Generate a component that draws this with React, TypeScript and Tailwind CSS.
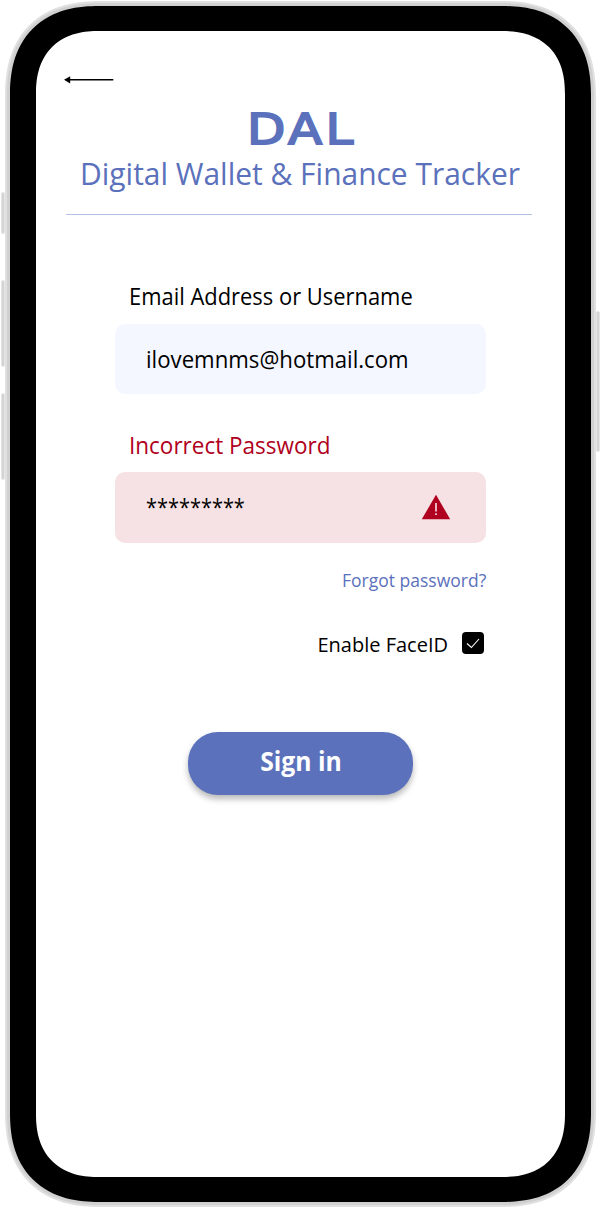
import React, { type ReactNode } from "react";

function SideButton({ className }: { className: string }) {
  return <div className={`absolute w-[4px] rounded-[2px] border border-[#e4e4e4] bg-[#d4d4d4] ${className}`} />;
}

function Phone({ children }: { children: ReactNode }) {
  return (
    <div className="relative h-[1208px] w-[601px] overflow-hidden bg-white pl-[5px] pr-[5px] pt-px pb-px">
      <SideButton className="left-[1px] top-[192px] h-[42px]" />
      <SideButton className="left-[1px] top-[280px] h-[87px]" />
      <SideButton className="left-[1px] top-[393px] h-[87px]" />
      <SideButton className="left-[596px] top-[311px] h-[141px]" />
      <div className="h-full rounded-[95px] border-2 border-[#e0e0e0] bg-[#d0d0d0] p-[3px] [corner-shape:superellipse(1.235)]">
        <div className="h-full rounded-[89px] bg-black px-[26px] py-[25px] [corner-shape:superellipse(1.235)]">
          <main className="flex h-full flex-col rounded-[63px] bg-white [corner-shape:superellipse(1.235)]">{children}</main>
        </div>
      </div>
    </div>
  );
}

export default function App() {
  return (
    <Phone>
      <button aria-label="Back" className="ml-[28px] mt-[44px] h-[10px] w-[50px]">
        <svg width="50" height="10" viewBox="0 0 50 10" fill="none">
          <path d="M5 4.8H49.3" stroke="#000" strokeWidth="1.4" />
          <path d="M0 4.8L6.2 1.2V8.4Z" fill="#000" />
        </svg>
      </button>
      <header className="ml-[30px] flex w-[466px] flex-col text-[#5b71bb]">
        <div className="ml-[181px] mt-[17px] origin-left scale-x-[1.16] font-['DejaVu_Sans',sans-serif] text-[43px] leading-[54px] tracking-[3px] [-webkit-text-stroke:1.8px_#5b71bb]">DAL</div>
        <h1 className="-mt-[2px] ml-[14px] w-max origin-left scale-x-[0.951] whitespace-nowrap font-['Open_Sans',sans-serif] text-[31.5px] leading-[38px]">Digital Wallet &amp; Finance Tracker</h1>
        <div className="mt-[22px] h-[1px] bg-[#b3c0e8]" />
      </header>
      <form className="ml-[79px] mt-[65px] flex w-[371px] flex-col whitespace-nowrap font-['Open_Sans',sans-serif] text-[23px] text-black">
        <label className="ml-[14px] w-max origin-left scale-x-[0.953] leading-[32px]">Email Address or Username</label>
        <div className="mt-[12px] flex h-[70px] items-center rounded-[10px] bg-[#f4f7ff] pl-[31px]">
          <span className="origin-left scale-x-[0.965]">ilovemnms@hotmail.com</span>
        </div>
        <label className="mt-[35px] ml-[14px] w-max origin-left scale-x-[0.978] leading-[32px] text-[#b00020]">Incorrect Password</label>
        <div className="mt-[11px] flex h-[71px] items-center justify-between rounded-[10px] bg-[#f6e2e5] pl-[31px] pr-[35px]">
          <span className="origin-left scale-x-[0.867]">*********</span>
          <svg className="mb-[2px]" width="30" height="26" viewBox="0 0 30 26">
            <path d="M15 .7L29.2 25.3H.8Z" fill="#b00020" />
            <path d="M15 9V17.5M15 19.3V21" stroke="#f6e2e5" strokeWidth="1.6" />
          </svg>
        </div>
        <a className="mt-[25px] origin-right scale-x-[0.973] self-end text-[18px] leading-[24px] text-[#5b71bb]">Forgot password?</a>
        <div className="mt-[38px] flex items-center justify-end gap-[14px] pr-[2px] text-[20px] leading-[26px]">
          <span className="pt-[2px]">Enable FaceID</span>
          <span className="mb-[2px] flex size-[22px] items-center justify-center rounded-[4px] bg-black">
            <svg width="22" height="22" viewBox="0 0 22 22" fill="none">
              <path d="M5 11.5L9.4 15.5L17 7" stroke="#fff" strokeWidth="1.1" />
            </svg>
          </span>
        </div>
        <button className="mt-[74px] ml-[73px] h-[63px] w-[225px] rounded-[30px] bg-[#5b71bb] pb-[6px] text-[26px] font-bold leading-none text-white shadow-[0_4px_6px_rgba(0,0,0,0.28)]">
          <span className="inline-block scale-x-[0.95]">Sign in</span>
        </button>
      </form>
    </Phone>
  );
}
